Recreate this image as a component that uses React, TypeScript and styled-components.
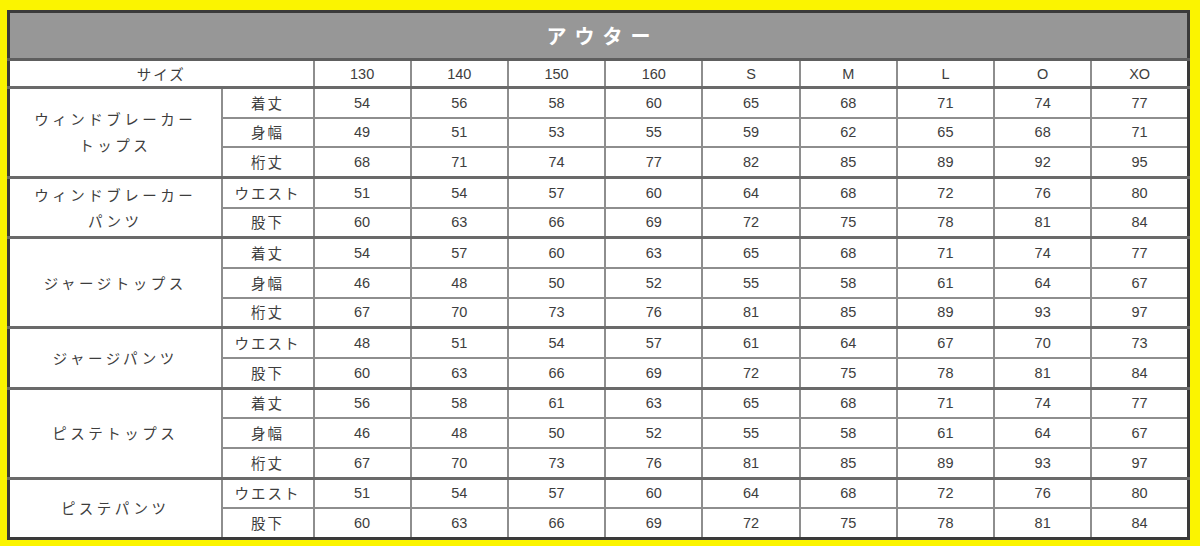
import React from 'react';
import styled, { createGlobalStyle } from 'styled-components';

const GlobalStyle = createGlobalStyle`
  html, body {
    margin: 0;
    padding: 0;
    background: #fbf400;
  }
  body {
    font-family: "Liberation Sans", "Noto Sans CJK JP", sans-serif;
  }
`;

const Frame = styled.div`
  width: 1200px;
  height: 546px;
  box-sizing: border-box;
  padding: 10px 10px 8px 7px;
  background: #fbf400;
`;

const Table = styled.table`
  width: 1183px;
  border-collapse: collapse;
  table-layout: fixed;
  background: #ffffff;
  border: 3px solid #3a3a3a;
  color: #3d3d3d;
`;

const TitleCell = styled.th`
  height: 45px;
  padding: 0;
  background: #979797;
  color: #ffffff;
  font-family: "Noto Sans CJK JP", sans-serif;
  font-size: 20px;
  font-weight: 700;
  letter-spacing: 8px;
  text-indent: 8px;
  border-bottom: 3px solid #5e5e5e;
`;

const Cell = styled.td<{ $groupTop?: boolean; $jp?: boolean; $spacing?: number }>`
  padding: 0;
  height: 27.66px;
  text-align: center;
  vertical-align: middle;
  font-size: 14.5px;
  line-height: 18px;
  font-family: ${(p) =>
    p.$jp ? '"Noto Sans CJK JP", sans-serif' : '"Liberation Sans", Arial, sans-serif'};
  letter-spacing: ${(p) => p.$spacing ?? 0}px;
  border: 2px solid #8e8e8e;
  border-top: ${(p) => (p.$groupTop ? '3px solid #6a6a6a' : '2px solid #8e8e8e')};
`;

const SizeCell = styled(Cell)`
  height: 25px;
`;

const GroupLine = styled.div`
  line-height: 26px;
`;

type Row = { label: string; values: number[] };
type Group = { name: string[]; rows: Row[] };

const sizes = ['130', '140', '150', '160', 'S', 'M', 'L', 'O', 'XO'];

const groups: Group[] = [
  {
    name: ['ウィンドブレーカー', 'トップス'],
    rows: [
      { label: '着丈', values: [54, 56, 58, 60, 65, 68, 71, 74, 77] },
      { label: '身幅', values: [49, 51, 53, 55, 59, 62, 65, 68, 71] },
      { label: '桁丈', values: [68, 71, 74, 77, 82, 85, 89, 92, 95] },
    ],
  },
  {
    name: ['ウィンドブレーカー', 'パンツ'],
    rows: [
      { label: 'ウエスト', values: [51, 54, 57, 60, 64, 68, 72, 76, 80] },
      { label: '股下', values: [60, 63, 66, 69, 72, 75, 78, 81, 84] },
    ],
  },
  {
    name: ['ジャージトップス'],
    rows: [
      { label: '着丈', values: [54, 57, 60, 63, 65, 68, 71, 74, 77] },
      { label: '身幅', values: [46, 48, 50, 52, 55, 58, 61, 64, 67] },
      { label: '桁丈', values: [67, 70, 73, 76, 81, 85, 89, 93, 97] },
    ],
  },
  {
    name: ['ジャージパンツ'],
    rows: [
      { label: 'ウエスト', values: [48, 51, 54, 57, 61, 64, 67, 70, 73] },
      { label: '股下', values: [60, 63, 66, 69, 72, 75, 78, 81, 84] },
    ],
  },
  {
    name: ['ピステトップス'],
    rows: [
      { label: '着丈', values: [56, 58, 61, 63, 65, 68, 71, 74, 77] },
      { label: '身幅', values: [46, 48, 50, 52, 55, 58, 61, 64, 67] },
      { label: '桁丈', values: [67, 70, 73, 76, 81, 85, 89, 93, 97] },
    ],
  },
  {
    name: ['ピステパンツ'],
    rows: [
      { label: 'ウエスト', values: [51, 54, 57, 60, 64, 68, 72, 76, 80] },
      { label: '股下', values: [60, 63, 66, 69, 72, 75, 78, 81, 84] },
    ],
  },
];

export default function App() {
  return (
    <>
      <GlobalStyle />
      <Frame>
        <Table>
          <colgroup>
            <col style={{ width: 213 }} />
            <col style={{ width: 92 }} />
            {sizes.map((s) => (
              <col key={s} />
            ))}
          </colgroup>
          <thead>
            <tr>
              <TitleCell colSpan={11}>アウター</TitleCell>
            </tr>
          </thead>
          <tbody>
            <tr>
              <SizeCell colSpan={2} $jp $spacing={2}>
                サイズ
              </SizeCell>
              {sizes.map((s) => (
                <SizeCell key={s}>{s}</SizeCell>
              ))}
            </tr>
            {groups.map((g) =>
              g.rows.map((r, i) => (
                <tr key={g.name.join() + r.label}>
                  {i === 0 && (
                    <Cell rowSpan={g.rows.length} $groupTop $jp $spacing={3.5}>
                      {g.name.map((n) => (
                        <GroupLine key={n}>{n}</GroupLine>
                      ))}
                    </Cell>
                  )}
                  <Cell $groupTop={i === 0} $jp $spacing={2}>
                    {r.label}
                  </Cell>
                  {r.values.map((v, j) => (
                    <Cell key={j} $groupTop={i === 0}>
                      {v}
                    </Cell>
                  ))}
                </tr>
              ))
            )}
          </tbody>
        </Table>
      </Frame>
    </>
  );
}
